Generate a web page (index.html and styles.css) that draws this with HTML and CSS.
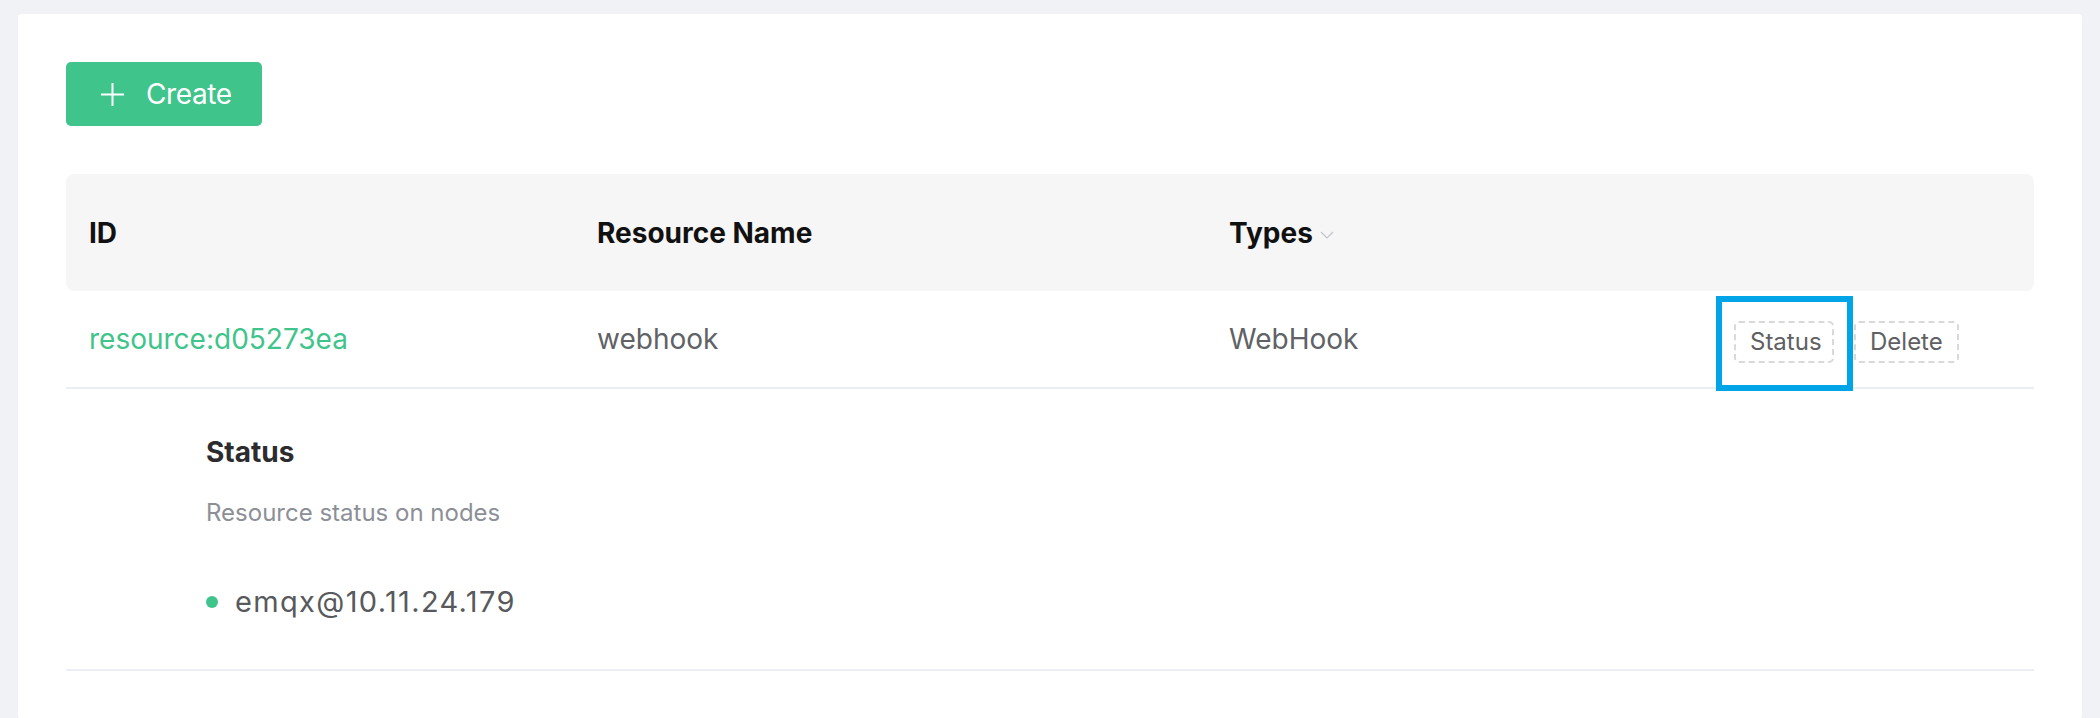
FILE: index.html
```html
<!DOCTYPE html>
<html lang="en">
<head>
<meta charset="utf-8">
<title>Resources</title>
<link rel="stylesheet" href="styles.css">
</head>
<body>
<div class="page">
  <div class="card">
    <button class="btn-create" type="button">
      <svg class="plus" width="23" height="23" viewBox="0 0 23 23" aria-hidden="true">
        <path d="M11.5 0V23M0 11.5H23" stroke="#fff" stroke-width="2" fill="none"/>
      </svg>
      <span>Create</span>
    </button>

    <div class="table">
      <div class="row thead">
        <div class="cell">ID</div>
        <div class="cell">Resource Name</div>
        <div class="cell">Types<svg class="caret" width="14" height="8" viewBox="0 0 14 8" aria-hidden="true"><path d="M1 1L7 7L13 1" stroke="#c0c4cc" stroke-width="1.2" fill="none"/></svg></div>
        <div class="cell"></div>
      </div>
      <div class="row tbody">
        <div class="cell link">resource:d05273ea</div>
        <div class="cell">webhook</div>
        <div class="cell">WebHook</div>
        <div class="cell actions">
          <button class="btn-dashed btn-status" type="button">Status<span class="highlight"></span></button>
          <button class="btn-dashed" type="button">Delete</button>
        </div>
      </div>
      <div class="expand">
        <div class="expand-title">Status</div>
        <div class="expand-sub">Resource status on nodes</div>
        <ul class="nodes">
          <li class="node"><span class="dot"></span>emqx@10.11.24.179</li>
        </ul>
      </div>
    </div>
  </div>
</div>
</body>
</html>
```

FILE: styles.css
```css
* { box-sizing: border-box; }

html, body {
  margin: 0;
  padding: 0;
  height: 100%;
}

body {
  background: #f0f2f5;
  font-family: Inter, "Noto Sans", "Liberation Sans", sans-serif;
  color: #606266;
}

.page {
  padding: 14px 18px 0 18px;
  height: 100%;
}

.card {
  background: #ffffff;
  border-radius: 4px;
  padding: 48px;
  min-height: 100%;
}

.btn-create {
  display: flex;
  align-items: center;
  gap: 22px;
  width: 196px;
  height: 64px;
  padding: 0 0 0 35px;
  border: none;
  border-radius: 5px;
  background: #3fc48b;
  color: #ffffff;
  font-family: inherit;
  font-size: 28px;
  letter-spacing: -0.4px;
  line-height: 1;
}

.plus { flex: none; display: block; }

.table {
  margin-top: 48px;
}

.row {
  display: grid;
  grid-template-columns: 508px 632px 505px 1fr;
  align-items: center;
}

.cell {
  padding-left: 23px;
  display: flex;
  align-items: center;
}

.thead {
  height: 117px;
  background: #f6f6f6;
  border-radius: 8px;
  color: #111111;
  font-weight: 700;
  font-size: 28px;
}

.caret {
  margin-left: 7px;
  margin-top: 4px;
  display: block;
}

.tbody {
  height: 98px;
  border-bottom: 2px solid #ebeef5;
  font-size: 28px;
  color: #606266;
}

.link { color: #3fc48b; }

.actions {
  gap: 20px;
  padding-top: 6px;
}

.btn-dashed {
  position: relative;
  height: 42px;
  padding: 0 14px;
  border: 2px dashed #d9d9d9;
  border-radius: 5px;
  background: #ffffff;
  color: #5f6063;
  font-family: inherit;
  font-size: 24px;
  line-height: 1;
}

.btn-status { width: 100px; }

.highlight {
  position: absolute;
  left: -20px;
  top: -27px;
  width: 137px;
  height: 95px;
  border: 6px solid #02a4e8;
}

.expand {
  padding: 43px 0 47px 140px;
  border-bottom: 2px solid #ebeef5;
}

.expand-title {
  font-size: 28px;
  line-height: 40px;
  font-weight: 700;
  color: #2c2c2e;
}

.expand-sub {
  margin-top: 24px;
  font-size: 24px;
  line-height: 34px;
  color: #8c8f96;
}

.nodes {
  list-style: none;
  margin: 52px 0 0 0;
  padding: 0;
}

.node {
  display: flex;
  align-items: center;
  font-size: 29px;
  line-height: 40px;
  letter-spacing: 1.35px;
  color: #58595c;
}

.dot {
  width: 12px;
  height: 12px;
  border-radius: 50%;
  background: #3fc48b;
  margin-right: 17px;
  flex: none;
}
```
